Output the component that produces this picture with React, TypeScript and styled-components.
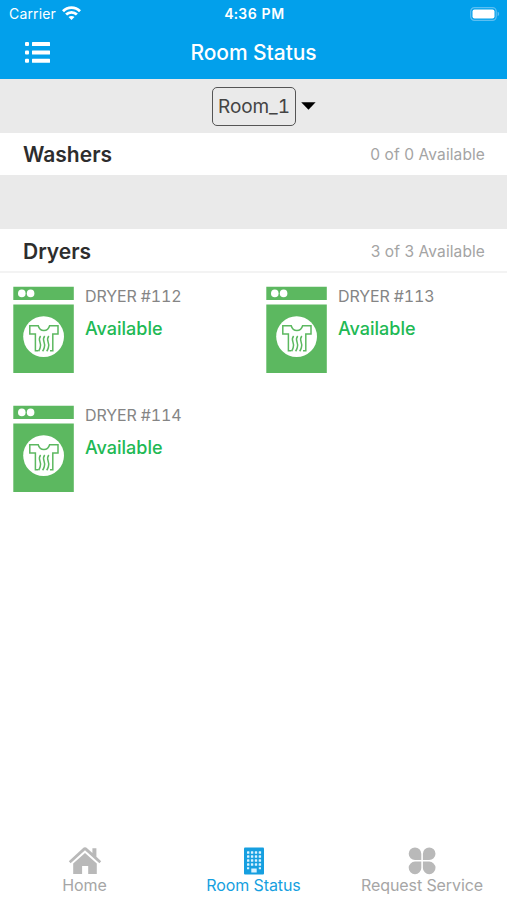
import React from 'react';
import styled, { createGlobalStyle } from 'styled-components';

const GlobalStyle = createGlobalStyle`
  * { box-sizing: border-box; }
  body { margin: 0; background: #fff; font-family: Inter, "Liberation Sans", sans-serif; }
  button { font: inherit; border: 0; background: none; padding: 0; margin: 0; }
  svg { display: block; flex: none; }
`;

const Screen = styled.div`
  width: 507px;
  height: 900px;
  display: flex;
  flex-direction: column;
  overflow: hidden;
  white-space: nowrap;
`;

const Header = styled.header`
  height: 79px;
  flex: none;
  background: #02a0eb;
  color: #fff;
`;

const StatusBar = styled.div`
  height: 27px;
  display: grid;
  grid-template-columns: 1fr auto 1fr;
  align-items: center;
  padding: 0 7px 0 9px;
  font-size: 14px;
`;

const Carrier = styled.div`
  display: flex;
  align-items: center;
  gap: 6px;
  letter-spacing: 0.15px;
`;

const Clock = styled.div`
  font-weight: 600;
  font-size: 14px;
  letter-spacing: 0.5px;
  font-variant-numeric: tabular-nums;
`;

const BatterySlot = styled.div`
  display: flex;
  justify-content: flex-end;
`;

const NavBar = styled.div`
  height: 51px;
  display: grid;
  grid-template-columns: 1fr auto 1fr;
  align-items: center;
  padding: 0 24px;
`;

const Title = styled.h1`
  margin: 0;
  font-size: 21px;
  font-weight: 500;
  letter-spacing: -0.05px;
`;

const RoomPicker = styled.div`
  height: 54px;
  flex: none;
  background: #eaeaea;
  display: flex;
  align-items: center;
  padding-left: 212px;
  gap: 5px;
`;

const RoomButton = styled.button`
  width: 84px;
  height: 39px;
  border: 1.5px solid #555;
  border-radius: 5px;
  color: #444;
  font-size: 19px;
  letter-spacing: -0.1px;
  font-variant-numeric: tabular-nums;
`;

const SectionHeader = styled.div<{ $divided?: boolean }>`
  height: ${(p) => (p.$divided ? 44 : 42)}px;
  flex: none;
  display: flex;
  align-items: center;
  justify-content: space-between;
  padding: ${(p) => (p.$divided ? 2 : 0)}px 22px 0 23px;
  border-bottom: ${(p) => (p.$divided ? '2px solid #f3f3f3' : '0')};
`;

const SectionTitle = styled.h2`
  margin: 0;
  font-size: 21px;
  font-weight: 600;
  color: #2d2d2d;
`;

const Count = styled.span`
  color: #a4a4a4;
  font-size: 15.5px;
  letter-spacing: 0.1px;
`;

const EmptySection = styled.div`
  height: 54px;
  flex: none;
  background: #eaeaea;
`;

const MachineGrid = styled.main`
  flex: 1;
  display: grid;
  grid-template-columns: 253px 1fr;
  grid-auto-rows: 118.5px;
  padding: 13px 0 0 13px;
`;

const Machine = styled.article`
  display: flex;
  gap: 11px;
`;

const MachineName = styled.div`
  color: #858585;
  font-size: 16px;
  letter-spacing: -0.12px;
  font-variant-numeric: tabular-nums;
  line-height: 20px;
`;

const MachineState = styled.div`
  color: #21b954;
  font-size: 18px;
  font-weight: 500;
  line-height: 24px;
  margin-top: 11px;
`;

const TabBar = styled.nav`
  height: 60px;
  flex: none;
  display: grid;
  grid-template-columns: 169px 169px 168px;
`;

const Tab = styled.button<{ $active?: boolean }>`
  display: flex;
  flex-direction: column;
  align-items: center;
  padding-top: 6px;
  color: ${(p) => (p.$active ? '#169fe0' : '#a6a6a6')};
  font-size: 16px;
  line-height: 20px;
`;

const TabLabel = styled.span`
  letter-spacing: -0.1px;
`;

const WifiIcon = () => (
  <svg width="19" height="15" viewBox="0 0 19 15" fill="none" stroke="#fff" strokeWidth="2.8">
    <path d="M1 5.2C5.8.4 13.2.4 18 5.2" />
    <path d="M4.1 8.6c3.1-3.1 7.7-3.1 10.8 0" />
    <path d="M6.5 11.1c1.8-1.6 4.2-1.6 6 0l-3 3z" fill="#fff" stroke="none" />
  </svg>
);

const BatteryIcon = () => (
  <svg width="30" height="14" viewBox="0 0 30 14">
    <rect x="0.7" y="0.7" width="25.5" height="12.6" rx="3.7" fill="none" stroke="#5cbff2" strokeWidth="1.2" />
    <rect x="2.5" y="2.5" width="22" height="9" rx="2" fill="#fff" />
    <path d="M27.6 4.8c2 .5 2 3.9 0 4.4z" fill="#5cbff2" />
  </svg>
);

const ListIcon = () => (
  <svg width="27" height="23" viewBox="0 0 27 23" fill="#fff">
    {[1, 9.4, 17.8].map((y) => (
      <g key={y}>
        <rect x="1" y={y} width="4" height="4" rx="1" />
        <rect x="8" y={y} width="18" height="4" rx="0.5" />
      </g>
    ))}
  </svg>
);

const CaretIcon = () => (
  <svg width="15" height="8" viewBox="0 0 15 8">
    <path d="M.2.3h14.4L7.5 7.8z" fill="#000" />
  </svg>
);

const DryerIcon = () => (
  <svg width="61" height="88" viewBox="0 0 61 88">
    <path d="M.3 .8h60.5V14H.3zM.3 18.6h60.5V87H.3z" fill="#5cb860" />
    <circle cx="8.8" cy="7.4" r="3.8" fill="#fff" />
    <circle cx="17.6" cy="7.4" r="3.8" fill="#fff" />
    <circle cx="30.6" cy="50.6" r="20.4" fill="#fff" />
    <g fill="none" stroke="#5cb860" strokeWidth="1.5">
      <path d="M25 64.8h-2.6V48h-5.6v-8.2h8.4c1.8 6.4 9.6 6.4 11.4 0H45V48h-5.2v16.8H37" />
      <path d="M27.6 50c-3.6 4.5 1.4 6-.4 11.5-.4 1.7-1 2.7-1.7 3.7M31.7 50c-3.6 4.5 1.4 6-.4 11.5-.4 1.7-1 2.7-1.7 3.7M35.8 50c-3.6 4.5 1.4 6-.4 11.5-.4 1.7-1 2.7-1.7 3.7" />
    </g>
  </svg>
);

const HomeIcon = () => (
  <svg width="34" height="29" viewBox="0 0 34 29" fill="#b9b9b9">
    <path d="M.8 15.2 14.6 2.4q2.4-2.2 4.8 0l5 4.6V2.2h4v8.5l4.8 4.5-1.8 2L17 4.3 2.6 17.2z" />
    <path d="M5.2 17.5 17 7l11.8 10.5V28h-8.6v-8h-6.1v8H5.2z" />
  </svg>
);

const BuildingIcon = () => (
  <svg width="22" height="29" viewBox="0 0 22 29">
    <rect x="1" y="1.5" width="20" height="27" rx="1" fill="#169fe0" />
    <g fill="#d9f2ff">
      {[5.3, 9.3, 13.3, 17.3].map((y) =>
        [4, 7.9, 11.8, 15.7].map((x) => <rect key={`${x}-${y}`} x={x} y={y} width="2.4" height="2.4" rx="0.5" />),
      )}
      <path d="M4 21.2h2.2v2H4zM15.8 21.2H18v2h-2.2zM8.3 22.4h5.4v4H8.3z" />
    </g>
  </svg>
);

const CloverIcon = () => (
  <svg width="28" height="29" viewBox="0 0 28 29" fill="#b9b9b9">
    <path d="M13.3 14H7.1A6.3 6.3 0 1 1 13.3 7.7zM14.9 14V7.7A6.3 6.3 0 1 1 21.1 14zM13.3 15.6v6.3a6.3 6.3 0 1 1-6.2-6.3zM14.9 15.6h6.2a6.3 6.3 0 1 1-6.2 6.3z" />
  </svg>
);

const dryers = [112, 113, 114];

export default function App() {
  return (
    <>
      <GlobalStyle />
      <Screen>
        <Header>
          <StatusBar>
            <Carrier>Carrier <WifiIcon /></Carrier>
            <Clock>4:36 PM</Clock>
            <BatterySlot><BatteryIcon /></BatterySlot>
          </StatusBar>
          <NavBar>
            <ListIcon />
            <Title>Room Status</Title>
          </NavBar>
        </Header>
        <RoomPicker>
          <RoomButton>Room_1</RoomButton>
          <CaretIcon />
        </RoomPicker>
        <SectionHeader>
          <SectionTitle>Washers</SectionTitle>
          <Count>0 of 0 Available</Count>
        </SectionHeader>
        <EmptySection />
        <SectionHeader $divided>
          <SectionTitle>Dryers</SectionTitle>
          <Count>3 of 3 Available</Count>
        </SectionHeader>
        <MachineGrid>
          {dryers.map((id) => (
            <Machine key={id}>
              <DryerIcon />
              <div>
                <MachineName>DRYER #{id}</MachineName>
                <MachineState>Available</MachineState>
              </div>
            </Machine>
          ))}
        </MachineGrid>
        <TabBar>
          <Tab><HomeIcon /><TabLabel>Home</TabLabel></Tab>
          <Tab $active><BuildingIcon /><TabLabel>Room Status</TabLabel></Tab>
          <Tab><CloverIcon /><TabLabel>Request Service</TabLabel></Tab>
        </TabBar>
      </Screen>
    </>
  );
}
